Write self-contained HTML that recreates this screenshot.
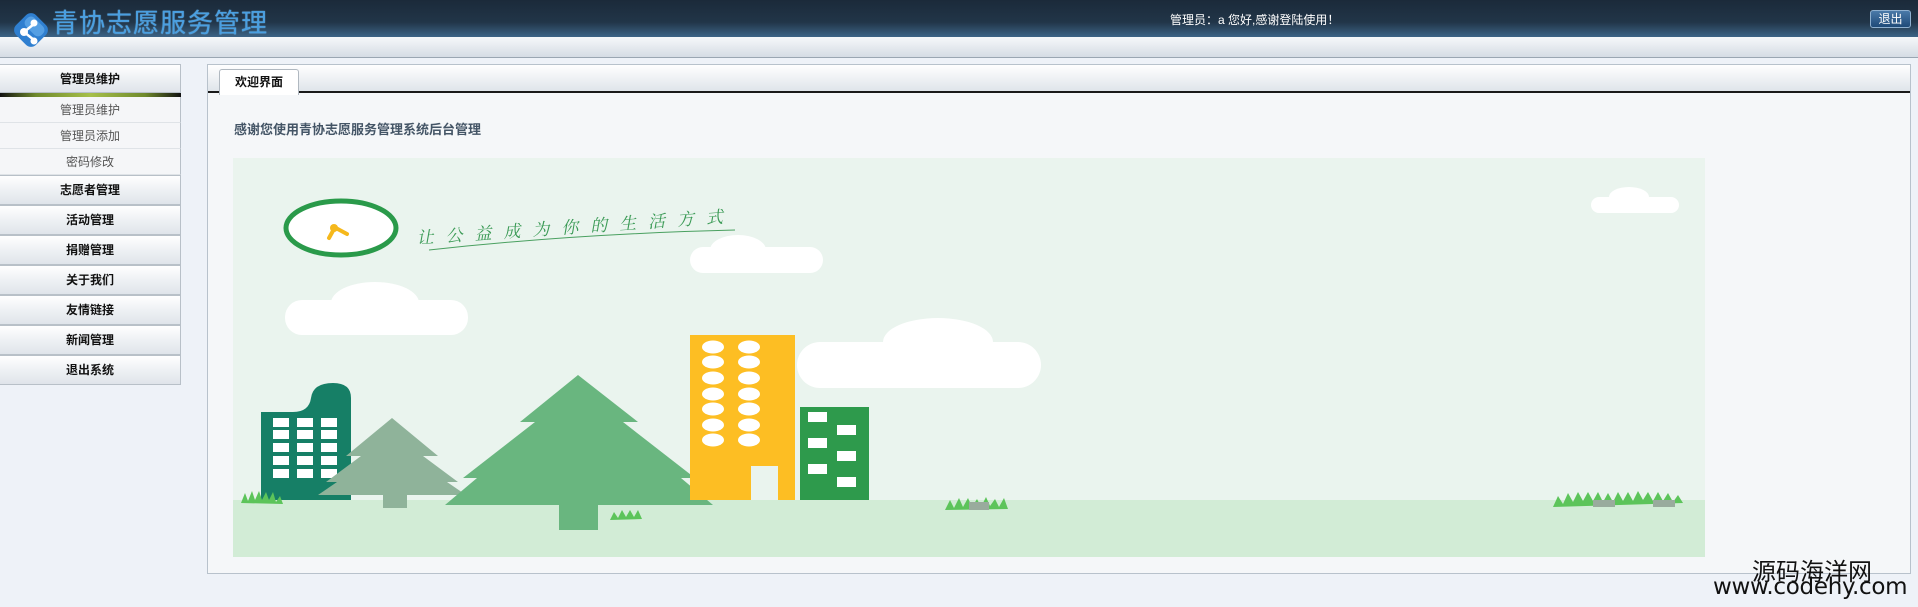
<!DOCTYPE html>
<html><head><meta charset="utf-8"><style>
*{margin:0;padding:0;box-sizing:border-box}
body{width:1918px;height:607px;overflow:hidden;background:#eef2f8;font-family:"Liberation Sans","Noto Sans CJK SC",sans-serif;font-size:12px;position:relative}
#hd{position:absolute;left:0;top:0;width:1918px;height:37px;background:linear-gradient(#1b2a3a,#213548 60%,#3d6486)}
#strip{position:absolute;left:0;top:37px;width:1918px;height:21px;background:linear-gradient(#f6f8fa,#d5dce4);border-bottom:1px solid #9aa6b2}
#logo{position:absolute;left:10px;top:10px;z-index:5}
#title{position:absolute;left:52px;top:8px;font-size:26px;line-height:30px;color:#4a9fe0;letter-spacing:1px;text-shadow:0 0 1px #7cc0f8}
#welcome{position:absolute;left:1170px;top:11px;color:#fff;font-size:12px}
#exit{position:absolute;left:1870px;top:10px;width:41px;height:18px;border:1px solid #8fb0d0;border-radius:3px;background:linear-gradient(#4a79a8,#1f4a78);color:#fff;font-size:12px;text-align:center;line-height:16px}
#side{position:absolute;left:0;top:64px;width:181px}
.it{height:30px;border:1px solid #b8c0c8;border-left:none;background:linear-gradient(#fff,#eef1f4 50%,#dfe4ea);text-align:center;font-weight:bold;line-height:28px;color:#111}
.bar{height:4px;background:linear-gradient(90deg,#111,#6f8a2c 20%,#a6c04a 50%,#6f8a2c 80%,#111)}
.sub{height:26px;border-right:1px solid #b8c0c8;border-bottom:1px solid #dfe3e7;background:#f5f6f8;text-align:center;line-height:26px;color:#555}
#main{position:absolute;left:207px;top:64px;width:1704px;height:510px;border:1px solid #b8c2cc;background:#f5f7f9}
#tabbar{position:absolute;left:0;top:0;width:100%;height:28px;background:linear-gradient(#fff,#dfe5ea);border-bottom:2px solid #1a1a1a}
#tab{position:absolute;left:11px;top:4px;width:80px;height:26px;background:#fff;border:1px solid #b0b8c0;border-bottom:none;border-radius:3px 3px 0 0;text-align:center;line-height:24px;font-weight:bold;color:#111}
#msg{position:absolute;left:26px;top:54px;font-size:13px;font-weight:bold;color:#445566}
#wm1{position:absolute;left:1752px;top:552px;font-size:24px;color:#111}
#wm2{position:absolute;left:1713px;top:574px;font-size:23px;color:#111;font-family:"DejaVu Sans",sans-serif;letter-spacing:-0.3px}
</style></head><body>
<div id="hd">
<div id="title">青协志愿服务管理</div>
<div id="welcome">管理员：a 您好,感谢登陆使用！</div>
<div id="exit">退出</div>
</div>
<div id="strip"></div>
<svg id="logo" width="44" height="42" viewBox="0 0 44 42"><rect x="7" y="6" width="28" height="28" rx="7" transform="rotate(45 21 20)" fill="#2f7fd0"/><rect x="10" y="9" width="22" height="12" rx="5" transform="rotate(45 21 20)" fill="#6fb4f0" opacity=".6"/><g stroke="#fff" stroke-width="2.5"><line x1="14" y1="22" x2="24" y2="14"/><line x1="14" y1="22" x2="24" y2="30"/></g><circle cx="14" cy="22" r="4" fill="#fff"/><circle cx="24" cy="13" r="3.5" fill="#fff"/><circle cx="24" cy="31" r="3.5" fill="#fff"/></svg>
<div id="side">
<div class="it" style="height:29px">管理员维护</div>
<div class="bar"></div>
<div class="sub">管理员维护</div>
<div class="sub">管理员添加</div>
<div class="sub">密码修改</div>
<div class="it">志愿者管理</div>
<div class="it">活动管理</div>
<div class="it">捐赠管理</div>
<div class="it">关于我们</div>
<div class="it">友情链接</div>
<div class="it">新闻管理</div>
<div class="it">退出系统</div>
</div>
<div id="main">
<div id="tabbar"><div id="tab">欢迎界面</div></div>
<div id="msg">感谢您使用青协志愿服务管理系统后台管理</div>
<svg style="position:absolute;left:25px;top:93px" width="1472" height="399" viewBox="0 0 1472 399">
<rect width="1472" height="399" fill="#eaf4ee"/>
<rect y="342" width="1472" height="57" fill="#d2ecd6"/>
<g fill="#fff">
<rect x="457" y="89" width="133" height="26" rx="13"/><ellipse cx="505" cy="92" rx="28" ry="15"/>
<rect x="52" y="142" width="183" height="35" rx="17"/><ellipse cx="142" cy="145" rx="44" ry="21"/>
<rect x="564" y="184" width="244" height="46" rx="23"/><ellipse cx="705" cy="184" rx="55" ry="24"/>
<rect x="1358" y="39" width="88" height="16" rx="8"/><ellipse cx="1396" cy="39" rx="20" ry="10"/>
</g>
<ellipse cx="108" cy="70" rx="55" ry="27" fill="#fff" stroke="#2a9a4a" stroke-width="5"/>
<g stroke="#f5b81c" stroke-width="4" stroke-linecap="round"><line x1="101" y1="71" x2="96" y2="80"/><line x1="101" y1="69" x2="114" y2="76"/></g><circle cx="101" cy="70" r="4" fill="#f5b81c"/>
<text x="184" y="86" font-family="Noto Serif CJK SC,serif" font-style="italic" font-size="17" fill="#3a9a55" letter-spacing="12" transform="rotate(-4 184 86)">让公益成为你的生活方式</text>
<path d="M196 92 Q340 76 502 72" stroke="#4aa060" stroke-width="1" fill="none"/>
<path d="M28 254 L28 342 L118 342 L118 240 Q118 225 100 225 Q80 225 78 240 Q76 254 60 254 Z" fill="#167f66"/>
<g fill="#fff"><rect x="40" y="260" width="16" height="9"/><rect x="64" y="260" width="16" height="9"/><rect x="88" y="260" width="16" height="9"/><rect x="40" y="272" width="16" height="9"/><rect x="64" y="272" width="16" height="9"/><rect x="88" y="272" width="16" height="9"/><rect x="40" y="285" width="16" height="9"/><rect x="64" y="285" width="16" height="9"/><rect x="88" y="285" width="16" height="9"/><rect x="40" y="298" width="16" height="9"/><rect x="64" y="298" width="16" height="9"/><rect x="88" y="298" width="16" height="9"/><rect x="40" y="311" width="16" height="9"/><rect x="64" y="311" width="16" height="9"/><rect x="88" y="311" width="16" height="9"/></g>
<path d="M159 260 L205 298 L190 298 L225 324 L214 324 L233 337 L85 337 L104 324 L93 324 L128 298 L113 298 Z" fill="#8fb39a"/><rect x="150" y="335" width="24" height="15" fill="#8fb39a"/>
<path d="M345 217 L405 264 L390 264 L462 320 L448 320 L480 347 L212 347 L244 320 L230 320 L302 264 L287 264 Z" fill="#69b67f"/><rect x="326" y="345" width="39" height="27" fill="#69b67f"/>
<rect x="457" y="177" width="105" height="165" fill="#fdbe23"/>
<g fill="#fff"><ellipse cx="480" cy="189" rx="11" ry="6.5"/><ellipse cx="516" cy="189" rx="11" ry="6.5"/><ellipse cx="480" cy="204" rx="11" ry="6.5"/><ellipse cx="516" cy="204" rx="11" ry="6.5"/><ellipse cx="480" cy="220" rx="11" ry="6.5"/><ellipse cx="516" cy="220" rx="11" ry="6.5"/><ellipse cx="480" cy="236" rx="11" ry="6.5"/><ellipse cx="516" cy="236" rx="11" ry="6.5"/><ellipse cx="480" cy="251" rx="11" ry="6.5"/><ellipse cx="516" cy="251" rx="11" ry="6.5"/><ellipse cx="480" cy="267" rx="11" ry="6.5"/><ellipse cx="516" cy="267" rx="11" ry="6.5"/><ellipse cx="480" cy="282" rx="11" ry="6.5"/><ellipse cx="516" cy="282" rx="11" ry="6.5"/></g>
<rect x="518" y="308" width="27" height="34" fill="#eaf4ee"/>
<rect x="567" y="249" width="69" height="93" fill="#2e9a4c"/>
<g fill="#fff"><rect x="575" y="254" width="19" height="10"/><rect x="604" y="267" width="19" height="10"/><rect x="575" y="280" width="19" height="10"/><rect x="604" y="293" width="19" height="10"/><rect x="575" y="306" width="19" height="10"/><rect x="604" y="319" width="19" height="10"/></g>
<g fill="#5cc45a"><path d="M8 345 l4-10 3 8 4-10 3 9 4-9 3 9 4-8 3 8 4-8 3 10 4-6 3 8Z"/><path d="M712 352 l5-10 4 8 5-10 4 9 5-9 4 9 5-8 4 8 5-10 4 9 5-7 4 8 5-9 4 11Z"/><path d="M1320 349 l5-11 5 8 5-11 5 9 5-10 5 9 5-9 5 9 5-9 5 10 5-9 5 9 5-10 5 9 5-9 5 9 5-10 5 9 5-8 5 9 5-9 5 9 5-8 5 9 5-7 5 8Z"/><path d="M377 362 l4-8 4 6 4-8 4 7 4-7 4 7 4-7 4 9Z"/></g>
<g fill="#99ab9d"><rect x="1360" y="342" width="22" height="7"/><rect x="1420" y="342" width="22" height="7"/><rect x="736" y="344" width="20" height="8"/></g>
</svg>
</div>
<div id="wm1">源码海洋网</div>
<div id="wm2">www.codehy.com</div>
</body></html>
